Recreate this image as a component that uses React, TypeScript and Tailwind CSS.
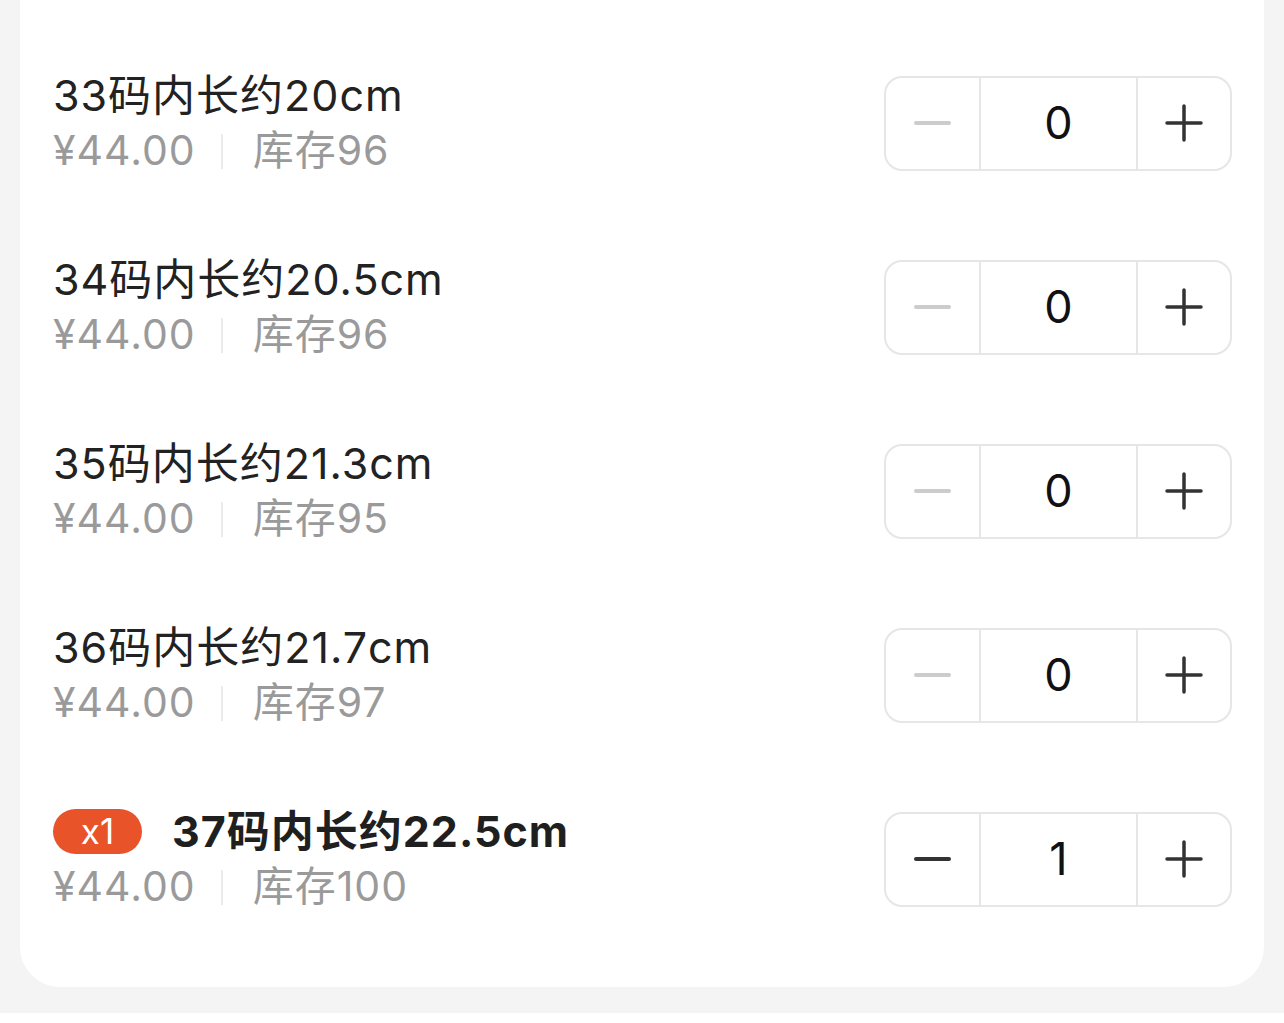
import { useState } from 'react';

interface Sku {
  name: string;
  price: string;
  stock: number;
}

const skus: Sku[] = [
  { name: '33码内长约20cm', price: '¥44.00', stock: 96 },
  { name: '34码内长约20.5cm', price: '¥44.00', stock: 96 },
  { name: '35码内长约21.3cm', price: '¥44.00', stock: 95 },
  { name: '36码内长约21.7cm', price: '¥44.00', stock: 97 },
  { name: '37码内长约22.5cm', price: '¥44.00', stock: 100 },
];

function Stepper({ value, onChange, max }: { value: number; onChange: (v: number) => void; max: number }) {
  const canMinus = value > 0;
  return (
    <div className="flex h-[95px] w-[348px] shrink-0 rounded-[18px] border-2 border-[#e6e6e6] bg-white">
      <button
        type="button"
        onClick={() => canMinus && onChange(value - 1)}
        className="flex w-[93px] items-center justify-center"
      >
        <span className={`block h-[4px] w-[37px] rounded-full ${canMinus ? 'bg-[#333333]' : 'bg-[#cccccc]'}`} />
      </button>
      <div className="flex w-[159px] items-center justify-center border-x-2 border-[#e6e6e6] text-[45px] text-[#111111]">
        {value}
      </div>
      <button
        type="button"
        onClick={() => value < max && onChange(value + 1)}
        className="flex flex-1 items-center justify-center"
      >
        <svg width="38" height="38" viewBox="0 0 38 38" fill="none">
          <path d="M19 2v34M2 19h34" stroke="#333333" strokeWidth="3.5" strokeLinecap="round" />
        </svg>
      </button>
    </div>
  );
}

export default function App() {
  const [counts, setCounts] = useState<number[]>([0, 0, 0, 0, 1]);

  const setCount = (i: number, v: number) => {
    setCounts((prev) => prev.map((c, idx) => (idx === i ? v : c)));
  };

  return (
    <div className="min-h-[1023px] bg-white font-['Inter','Noto_Sans_CJK_SC',sans-serif]">
      <div className="bg-[#f4f4f4] px-[20px] pb-[26px]">
        <div className="rounded-b-[40px] bg-white px-[32px] pt-[31px] pb-[36px]">
          {skus.map((sku, i) => {
            const picked = counts[i] > 0;
            return (
              <div key={sku.name} className="flex h-[184px] items-center justify-between pl-[1px]">
                <div className="flex flex-col">
                  <div className="flex h-[56px] items-center">
                    {picked && (
                      <span className="mr-[30px] flex h-[45px] w-[89px] items-center justify-center rounded-full bg-[#e8532a] text-[35px] leading-none text-white">
                        x{counts[i]}
                      </span>
                    )}
                    <span
                      className={`text-[43px] leading-[56px] tracking-[1px] ${picked ? 'font-bold text-[#1f1f1f]' : 'text-[#222222]'}`}
                    >
                      {sku.name}
                    </span>
                  </div>
                  <div className="flex h-[56px] items-center text-[41px] tracking-[1px] text-[#9a9a9a]">
                    <span>{sku.price}</span>
                    <span className="ml-[25px] mr-[30px] block h-[35px] w-[2px] bg-[#ebebeb]" />
                    <span>库存{sku.stock}</span>
                  </div>
                </div>
                <Stepper value={counts[i]} max={sku.stock} onChange={(v) => setCount(i, v)} />
              </div>
            );
          })}
        </div>
      </div>
    </div>
  );
}
